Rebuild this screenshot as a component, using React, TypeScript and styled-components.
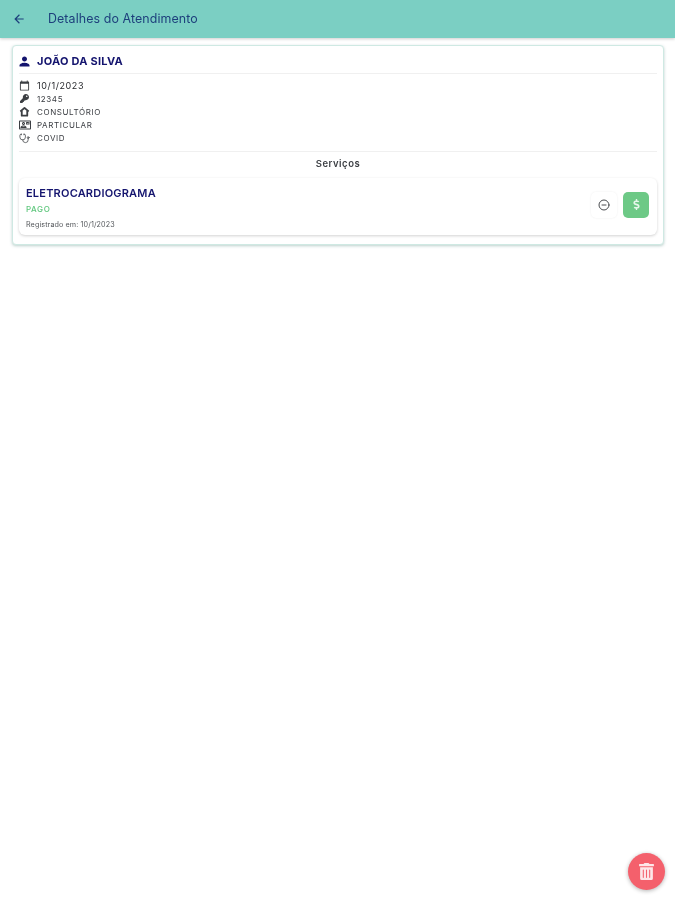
import * as React from "react";
import styled, { createGlobalStyle } from "styled-components";
import { FaKey, FaTrashAlt, FaDollarSign } from "react-icons/fa";
import { MdPerson, MdArrowBack, MdCalendarToday, MdOutlineContactMail } from "react-icons/md";
import { FiMinusCircle } from "react-icons/fi";
import { Stethoscope } from "lucide-react";

const GlobalStyle = createGlobalStyle`
    html, body {
        margin: 0;
        padding: 0;
        background: #fff;
        font-family: "Inter", "Liberation Sans", sans-serif;
    }
`

const Page = styled.div`
    position: relative;
    width: 675px;
    height: 900px;
    overflow: hidden;
    filter: blur(0.45px);
`

const Header = styled.header`
    display: flex;
    align-items: center;
    height: 38px;
    padding: 0 0 1px 12px;
    gap: 22px;
    box-sizing: border-box;
    background: #7bcfc3;
    box-shadow: 0 1px 3px rgba(0, 0, 0, 0.2);
    color: #1d3f7c;
`
const HeaderTitle = styled.h1`
    margin: 0;
    font-size: 12.4px;
    font-weight: 400;
    letter-spacing: 0.1px;
`

const Card = styled.section`
    margin: 7px 11px 0 12px;
    padding: 4px 6px 9px;
    height: 200px;
    box-sizing: border-box;
    border: 1px solid #cfe9e3;
    border-radius: 4px;
    box-shadow: 0 1px 3px rgba(60, 120, 110, 0.35);
    background: #fff;
`
const NameRow = styled.div`
    display: flex;
    align-items: center;
    gap: 7px;
    height: 24px;
    padding-bottom: 1px;
    box-sizing: border-box;
    color: #14146e;
    font-size: 11px;
    font-weight: 700;
    letter-spacing: 0.25px;
    border-bottom: 1px solid #f0f0f0;
`
const InfoList = styled.div`
    display: flex;
    flex-direction: column;
    padding: 5px 0 6px;
    border-bottom: 1px solid #f0f0f0;
`
const InfoRow = styled.div<{ $strong?: boolean }>`
    display: flex;
    align-items: center;
    gap: 7px;
    height: 13.2px;
    font-size: ${({ $strong }) => ($strong ? "9px" : "8px")};
    letter-spacing: 0.6px;
    color: ${({ $strong }) => ($strong ? "#26282c" : "#3a3d42")};
`
const IconSlot = styled.span<{ $dark?: boolean }>`
    display: flex;
    justify-content: center;
    align-items: center;
    width: 11px;
    color: ${({ $dark }) => ($dark ? "#14146e" : "#3b3e42")};
    svg {
        flex-shrink: 0;
    }
`
const SectionTitle = styled.div`
    padding: 6px 0 9px;
    text-align: center;
    font-size: 9.5px;
    font-weight: 600;
    letter-spacing: 0.5px;
    color: #3c3f44;
`
const ServiceCard = styled.article`
    display: flex;
    align-items: center;
    justify-content: space-between;
    height: 57px;
    padding: 0 8px 0 7px;
    box-sizing: border-box;
    border-radius: 6px;
    background: #fff;
    box-shadow: 0 1px 3px rgba(0, 0, 0, 0.18);
`
const ServiceText = styled.div`
    display: flex;
    flex-direction: column;
    padding-top: 3px;
`
const ServiceName = styled.div`
    font-size: 11px;
    font-weight: 600;
    letter-spacing: 0.2px;
    color: #14146e;
`
const Status = styled.div`
    margin-top: 4px;
    font-size: 8px;
    font-weight: 500;
    letter-spacing: 0.6px;
    color: #5fc77d;
`
const Registered = styled.div`
    margin-top: 6px;
    font-size: 7.2px;
    letter-spacing: 0.1px;
    color: #55585c;
`
const Actions = styled.div`
    display: flex;
    align-items: center;
    gap: 6px;
    margin-bottom: 3px;
`
const ActionButton = styled.button<{ $filled?: boolean }>`
    display: flex;
    align-items: center;
    justify-content: center;
    width: 26px;
    height: 26px;
    padding: 0;
    border: none;
    border-radius: 5px;
    background: ${({ $filled }) => ($filled ? "#6dc986" : "#fff")};
    color: ${({ $filled }) => ($filled ? "#e6f7ea" : "#4a4c50")};
    box-shadow: ${({ $filled }) => ($filled ? "none" : "0 0 2px rgba(0, 0, 0, 0.08)")};
`
const Fab = styled.button`
    position: absolute;
    right: 10px;
    bottom: 10px;
    display: flex;
    align-items: center;
    justify-content: center;
    width: 37px;
    height: 37px;
    padding: 0;
    border: none;
    border-radius: 50%;
    background: #f4606c;
    color: #fde6e8;
    box-shadow: 0 1px 4px rgba(0, 0, 0, 0.3);
`

const HomeIcon = () => (
    <svg width="11" height="11" viewBox="0 0 24 24" fill="none" stroke="currentColor" strokeWidth="4" strokeLinejoin="round">
        <path d="M3 12 12 4l9 8" />
        <path d="M6 11v10h12V11" />
    </svg>
);

const infoRows = [
    { icon: <MdCalendarToday size={11} />, label: "10/1/2023", strong: true },
    { icon: <FaKey size={9} />, label: "12345" },
    { icon: <HomeIcon />, label: "CONSULTÓRIO" },
    { icon: <MdOutlineContactMail size={12} />, label: "PARTICULAR" },
    { icon: <Stethoscope size={11} strokeWidth={1.6} />, label: "COVID" },
];

export default function App() {
    return (
        <Page>
            <GlobalStyle />
            <Header>
                <MdArrowBack size={14} />
                <HeaderTitle>Detalhes do Atendimento</HeaderTitle>
            </Header>
            <Card>
                <NameRow>
                    <IconSlot $dark><MdPerson size={15} /></IconSlot>
                    JOÃO DA SILVA
                </NameRow>
                <InfoList>
                    {infoRows.map((row) => (
                        <InfoRow key={row.label} $strong={row.strong}>
                            <IconSlot>{row.icon}</IconSlot>
                            {row.label}
                        </InfoRow>
                    ))}
                </InfoList>
                <SectionTitle>Serviços</SectionTitle>
                <ServiceCard>
                    <ServiceText>
                        <ServiceName>ELETROCARDIOGRAMA</ServiceName>
                        <Status>PAGO</Status>
                        <Registered>Registrado em: 10/1/2023</Registered>
                    </ServiceText>
                    <Actions>
                        <ActionButton><FiMinusCircle size={12} /></ActionButton>
                        <ActionButton $filled><FaDollarSign size={11} /></ActionButton>
                    </Actions>
                </ServiceCard>
            </Card>
            <Fab><FaTrashAlt size={17} /></Fab>
        </Page>
    );
}
